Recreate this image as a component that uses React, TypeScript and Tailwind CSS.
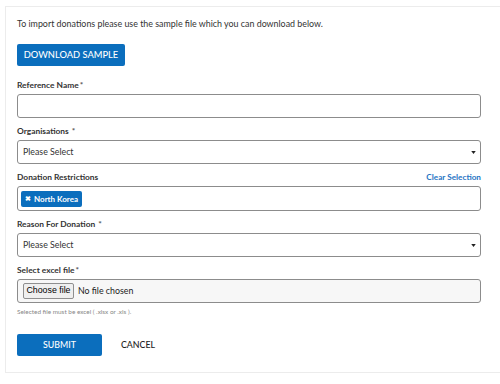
export default function App() {
  return (
    <div className="w-[500px] h-[384px] overflow-hidden bg-white font-['Lato','Liberation_Sans',sans-serif] text-[#333]">
      <div className="ml-[5px] mt-[6px] w-[520px] h-[367px] border border-[#ececec] pl-[11px] pt-[9px]">
        <div className="w-[464px]">
          <p className="text-[8.9px] leading-[16px] text-[#333]">
            To import donations please use the sample file which you can download below.
          </p>
          <button className="mt-[12px] flex h-[22px] w-[108px] items-center justify-center whitespace-nowrap rounded-[2px] bg-[#0b6ebd] text-[9.3px] font-medium uppercase text-white">
            Download Sample
          </button>

          <Label text="Reference Name" required className="mt-[13px]" />
          <div className="h-[24px] rounded-[3px] border border-[#8c8c8c] bg-white" />

          <Label text="Organisations" required spaced className="mt-[7px]" />
          <SelectBox />

          <div className="mt-[7px] mb-[3px] flex h-[12px] items-center justify-between">
            <span className="text-[8.4px] font-bold text-[#333]">Donation Restrictions</span>
            <span className="text-[8.2px] font-bold text-[#1f74c4]">Clear Selection</span>
          </div>
          <div className="flex h-[25px] items-center rounded-[3px] border border-[#8c8c8c] bg-white pl-[3px]">
            <span className="flex h-[16px] items-center gap-[3px] whitespace-nowrap rounded-[2px] bg-[#0b6ebd] px-[4px] text-[8px] font-bold text-white">
              <span className="text-[6.5px]">✖</span>
              North Korea
            </span>
          </div>

          <Label text="Reason For Donation" required spaced className="mt-[7px]" />
          <SelectBox />

          <Label text="Select excel file" required className="mt-[7px]" />
          <div className="flex h-[24px] items-center rounded-[3px] border border-[#8c8c8c] bg-[#f7f7f7] pl-[5px]">
            <span className="flex h-[16px] w-[51px] items-center justify-center rounded-[2px] border border-[#8f8f8f] bg-[#efefef] font-['Liberation_Sans',sans-serif] text-[8.8px] text-black">
              Choose file
            </span>
            <span className="ml-[4px] text-[8.8px] text-[#222]">No file chosen</span>
          </div>
          <p className="mt-[4px] text-[6.4px] leading-[10px] text-[#888]">
            Selected file must be excel ( .xlsx or .xls ).
          </p>

          <div className="mt-[17px] flex items-center">
            <button className="flex h-[22px] w-[85px] items-center justify-center rounded-[2px] bg-[#0b6ebd] text-[8.8px] font-medium uppercase text-white">
              Submit
            </button>
            <span className="ml-[19px] text-[8.8px] font-medium uppercase text-[#222]">Cancel</span>
          </div>
        </div>
      </div>
    </div>
  );
}

function Label({
  text,
  required,
  spaced,
  className = "",
}: {
  text: string;
  required?: boolean;
  spaced?: boolean;
  className?: string;
}) {
  return (
    <div className={`mb-[3px] h-[12px] text-[8.4px] leading-[12px] font-bold text-[#333] ${className}`}>
      {text}
      {required && <span className={`text-[#555] ${spaced ? "ml-[3px]" : "ml-[1px]"}`}>*</span>}
    </div>
  );
}

function SelectBox() {
  return (
    <div className="flex h-[24px] items-center justify-between rounded-[3px] border border-[#8c8c8c] bg-white pl-[5px] pr-[4px]">
      <span className="text-[8.8px] text-[#333]">Please Select</span>
      <svg width="5" height="3" viewBox="0 0 6 4">
        <path d="M0 0 L6 0 L3 4 Z" fill="#222" />
      </svg>
    </div>
  );
}
